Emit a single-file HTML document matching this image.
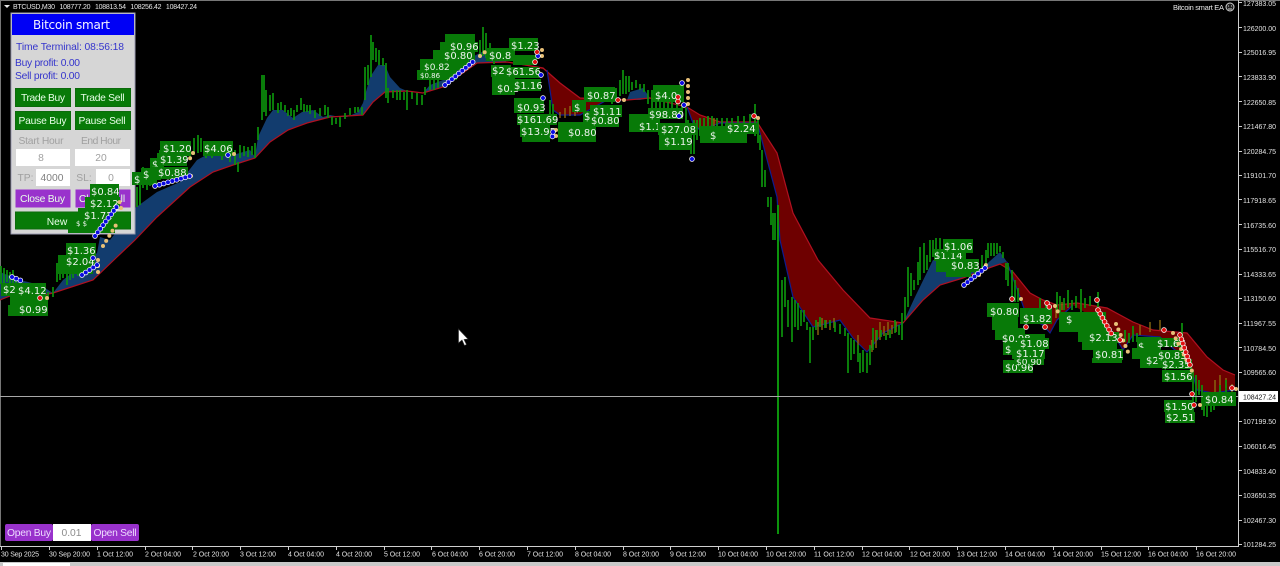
<!DOCTYPE html>
<html><head><meta charset="utf-8"><style>
html,body{margin:0;padding:0;background:#000;width:1280px;height:566px;overflow:hidden}
svg{display:block;position:absolute;left:0;top:0}
text{font-family:"Liberation Sans",sans-serif}
.ax text{font-size:7px;fill:#e4e4e4}
.tm text{font-size:7px;fill:#e4e4e4}
.c{fill:none;stroke:#0c930c;stroke-width:1.7;stroke-linejoin:miter}
.o{fill:none;stroke:#8a6a10;stroke-width:1.4}
.lb rect{fill:#087a08}
.lb text{font-family:"DejaVu Sans",sans-serif;font-size:10px;fill:#eef4ee}
.p text{font-size:10.300px}
.gb{fill:#087a08;stroke:#0b6b0b}
.wt{fill:#e8ffe8;text-anchor:middle}
.gy{fill:#a0a0a0;text-anchor:middle}
.bl{fill:#3434cc}
.mw{fill:none;stroke:#fff;stroke-width:5.500;stroke-linecap:round;stroke-dasharray:0 4.500}
.mb{fill:none;stroke:#0a0ae0;stroke-width:4;stroke-linecap:round;stroke-dasharray:0 4.500}
.mr{fill:none;stroke:#e01010;stroke-width:4;stroke-linecap:round;stroke-dasharray:0 4.500}
.ma{fill:none;stroke:#e8c078;stroke-width:4;stroke-linecap:round;stroke-dasharray:0 6}
</style></head><body>
<svg width="1280" height="566" viewBox="0 0 1280 566" xmlns="http://www.w3.org/2000/svg">
<rect width="1280" height="566" fill="#000"/>
<rect x="0" y="0" width="1280" height="1" fill="#777"/>
<rect x="0" y="0" width="1" height="547" fill="#777"/>

<!-- Blue bands -->
<path fill="#123c6e" d="M0 272L20 280L40 285L53 293L63 280L97 253L100 237L110 240L135 208L157 192L180 182L197 160L210 153L233 155L250 150L255 157L258 137L267 118L273 110L283 110L293 118L302 112L313 110L323 117L330 115L340 117L347 117L358 112L363 103L370 77L378 65L385 65L390 77L400 88L407 91L423 93L430 85L443 80L470 58L490 48L507 62L477 63L443 87L423 93L407 91L385 92L373 102L363 115L330 117L307 123L288 130L270 142L255 158L233 165L213 172L190 187L157 217L135 240L117 257L93 280L53 293L30 298L10 296L0 300Z"/>
<path fill="#123c6e" d="M627 100L630 92L643 88L650 98L640 100Z"/>
<path fill="#123c6e" d="M903 323L915 297L933 260L965 262L980 270L1000 252L1007 262L1000 264L983 270L963 278L940 285L923 300Z"/>
<!-- Red bands -->
<path fill="#6e0000" d="M507 62L543 68L560 83L580 98L607 100L580 115L560 115L553 110L547 70Z"/>
<path fill="#6e0000" d="M650 98L687 107L700 115L720 122L757 122L777 153L793 213L818 260L843 290L870 318L903 323L883 333L867 352L853 338L840 320L813 327L793 297L780 240L777 197L760 133L757 123L720 123L700 130L693 123L687 107Z"/>
<path fill="#6e0000" d="M1000 264L1013 272L1030 293L1043 300L1057 305L1077 303L1107 308L1133 322L1153 330L1187 333L1207 357L1223 370L1235 375L1235 390L1213 393L1197 390L1190 363L1160 337L1133 335L1123 350L1110 328L1073 305L1057 320L1050 333L1043 325L1027 317L1020 297L1007 262Z"/>
<!-- Slow line -->
<path fill="none" stroke="#b01020" stroke-width="1.2" d="M0 300L10 296L30 298L53 293L93 280L117 257L135 240L157 217L190 187L213 172L233 165L255 158L270 142L288 130L307 123L330 117L363 115L373 102L385 92L407 91L423 93L443 87L477 63L507 62L543 68L560 83L580 98L627 100L650 98L687 107L700 115L720 122L757 122L777 153L793 213L818 260L843 290L870 318L903 323L923 300L940 285L963 278L983 270L1000 264L1013 272L1030 293L1043 300L1057 305L1077 303L1107 308L1133 322L1153 330L1187 333L1207 357L1223 370L1235 375"/>
<!-- Fast line lower edge -->
<path fill="none" stroke="#0d1c90" stroke-width="1.2" d="M547 70L553 110L560 115L580 115L607 100M687 107L693 123L700 130L720 123L757 123L760 133L777 197L780 240L793 297L813 327L840 320L853 338L867 352L883 333L903 323M1007 262L1020 297L1027 317L1043 325L1050 333L1057 320L1073 305M1110 328L1123 350L1133 335L1160 337L1190 363L1197 390L1213 393L1235 390"/>

<!-- Orange candles -->
<path class="o" d="M560 112V118M565 108V118M570 106V116M575 110V116M858 335V350M818 322V335M822 318V330M826 320V328M830 322V330M834 318V328M872 340V352M876 330V348M880 322V340M884 326V336M888 322V335M892 325V334M896 322V332M1050 320V312M1056 318V305M1062 310V302M1068 308V300M1140 325V335M1150 322V332M1160 320V330M1215 380V392M1220 375V390M1226 378V388M1232 384V392M700 128V118M708 124V116M714 126V118"/>

<!-- Price -->
<path class="c" d="M1 266V284M4 268V284M7 270V282M10 272V284M13 270V284M16 276V288M20 278V286"/>
<path class="c" d="M48 292V300M53 287V297M57 263V282M60 265V280M63 268V278M67 270V285M70 270V280M73 272V278M78 270V276M137 187V207M140 180V205M143 167V188M147 172V190M150 170V186M153 165V180M160 150V170M165 148V165M170 145V162M190 142V160M194 138V155M198 135V153M201 138V152M206 150V158M212 152V158M222 150V160M230 150V162M235 150V165M238 162V172M240 145V158M244 146V156M248 147V157M252 146V155M255 143V158M258 127V140M262 75V120M264 75V112M266 90V116M270 95V111M273 93V110M278 103V113M281 102V110M285 105V112M288 110V116M291 108V116M294 110V120M297 105V112M301 98V110M304 104V112M307 105V112M310 105V114M315 110V118M320 108V116M325 105V115M328 107V118M332 117V125M336 118V124M340 117V127M345 113V119M350 108V115M355 107V113M358 107V112M362 107V115M365 67V100M368 65V85M371 35V77M373 42V60M376 48V62M379 50V65M383 58V66M386 63V98M388 88V103M393 90V98M397 90V100M400 90V100M404 92V100M407 90V110M412 92V99M417 93V105M422 95V105M425 87V95M430 80V90M434 78V90M438 74V88M445 68V80M452 60V75M460 55V70M468 50V65M474 46V60M480 40V58M483 27V56M486 33V58M490 43V60M494 48V64"/>
<path class="c" d="M550 100V116M553 104V118M612 92V104M616 88V100M620 80V96M623 70V94M626 76V94M629 76V92M632 82V90M636 80V88M640 84V90M644 84V92M648 90V104M652 90V110M656 96V110M660 96V114M664 98V114M668 98V116M672 100V116M677 100V118M682 104V118M686 108V150M688 120V150M691 126V154M694 120V154M697 120V140M700 118V136M704 118V136M708 116V138M712 116V138M717 118V138M722 118V130M727 118V130M732 118V128M738 116V128M744 116V126M750 114V126M755 104V136M758 120V143M760 135V150M762 150V187M765 170V187M768 197V207M771 197V225M773 213V240M775 213V240"/>
<path fill="none" stroke="#0c930c" stroke-width="2" d="M778 205V534"/>
<path class="c" d="M782 280V337M785 277V307M788 300V327M792 297V342M795 300V327M798 303V330M801 310V326M804 310V322M807 322V330M810 327V363M813 327V340M816 320V330M820 317V327M825 320V328M830 320V326M835 322V332M840 324V334M845 328V336M848 333V373M851 338V360M854 340V354M858 345V362M860 353V373M863 350V372M867 353V373M870 345V365M873 328V350M877 330V340M881 330V337M886 333V340M890 330V338M895 320V333M899 325V335M902 313V340M905 297V320M908 267V307M911 273V296M914 280V290M918 262V285M920 247V280M924 243V273M927 255V270M930 240V262M933 240V257M936 238V255M940 238V258M944 240V256"/>
<path class="c" d="M975 262V276M978 262V276M982 255V270M986 250V268M988 243V258M991 243V256M994 243V256M997 243V254M1000 246V252M1003 252V258M1006 263V280M1008 263V286M1012 270V298M1015 280V302M1018 288V302M1040 298V310M1046 300V312M1057 292V310M1060 296V312M1064 298V310M1068 290V307M1072 300V310M1076 296V308M1081 289V312M1085 298V308M1090 296V306M1098 292V307M1125 330V342M1129 333V343M1133 326V342M1137 333V342M1182 323V337M1193 370V403M1196 375V402M1199 380V395M1202 385V410M1204 392V416M1207 393V417M1211 400V412M1214 402V410M1218 395V405M1220 385V400M1226 380V392"/>

<!-- crosshair -->
<rect x="0" y="396" width="1238" height="1" fill="#a8a8a8"/>

<!-- Panel -->
<g class="p">
<rect x="11" y="13" width="124" height="221" fill="#d6d6d6" stroke="#9a9ab0"/>
<rect x="12" y="14" width="122" height="21" fill="#0000f5"/>
<text x="71.5" y="29" fill="#f4f4ff" text-anchor="middle" textLength="77" style="font-size:12px;font-family:'DejaVu Sans',sans-serif">Bitcoin smart</text>
<text class="bl" x="16" y="50" textLength="108">Time Terminal: 08:56:18</text>
<text class="bl" x="15" y="66" textLength="65">Buy profit: 0.00</text>
<text class="bl" x="15" y="79" textLength="65">Sell profit: 0.00</text>
<rect class="gb" x="15.5" y="88.5" width="55" height="18"/><rect class="gb" x="75.5" y="88.5" width="55" height="18"/>
<text class="wt" x="43" y="101" textLength="44">Trade Buy</text><text class="wt" x="102.500" y="101" textLength="44">Trade Sell</text>
<rect class="gb" x="15.5" y="111.500" width="55" height="18"/><rect class="gb" x="75.5" y="111.500" width="55" height="18"/>
<text class="wt" x="42.500" y="124" textLength="48">Pause Buy</text><text class="wt" x="102" y="124" textLength="47">Pause Sell</text>
<text class="gy" x="41" y="144" textLength="45">Start Hour</text><text class="gy" x="101" y="144" textLength="40">End Hour</text>
<rect x="16" y="149" width="54" height="17" fill="#fff"/><rect x="75" y="149" width="55" height="17" fill="#fff"/>
<text class="gy" x="41" y="161">8</text><text class="gy" x="101" y="161">20</text>
<text class="gy" x="25.500" y="181">TP:</text><text class="gy" x="84" y="181">SL:</text>
<rect x="36" y="169" width="34" height="17" fill="#fff"/><rect x="96" y="169" width="34" height="17" fill="#fff"/>
<text x="52" y="181" text-anchor="middle" fill="#808080">4000</text><text class="gy" x="111" y="181">0</text>
<rect x="15.5" y="189.500" width="55" height="18" fill="#9932cc"/><rect x="75.500" y="189.500" width="55" height="18" fill="#9932cc"/>
<text class="wt" x="42.500" y="202" textLength="45">Close Buy</text><text class="wt" x="102" y="202">Close Sell</text>
<rect class="gb" x="15.5" y="212" width="115" height="17"/>
<text class="wt" x="57" y="225">New</text>
<!-- bottom -->
<rect x="5" y="524" width="48" height="17" rx="2" fill="#9932cc"/><rect x="91" y="524" width="48" height="17" rx="2" fill="#9932cc"/>
<rect x="53" y="524" width="38" height="17" fill="#fff"/>
<text class="wt" x="29" y="536" textLength="44" style="fill:#eedcff">Open Buy</text>
<text class="wt" x="115" y="536" textLength="43" style="fill:#eedcff">Open Sell</text>
<text class="gy" x="71.500" y="536" style="fill:#8c8c8c">0.01</text>
</g>

<!-- Labels -->
<g class="lb">
<rect x="132" y="172" width="25" height="13"/><text x="134" y="183">$</text>
<rect x="141" y="168" width="20" height="12"/><text x="143" y="178">$</text>
<rect x="150" y="158" width="14" height="12"/><text x="152" y="168">$</text>
<rect x="160" y="141" width="31" height="15"/><text x="163" y="152">$1.20</text>
<rect x="157" y="153" width="30" height="13"/><text x="160" y="163">$1.39</text>
<rect x="150" y="167" width="38" height="12"/><text x="158" y="176">$0.88</text>
<rect x="203" y="141" width="30" height="15"/><text x="204" y="152">$4.06</text>
<rect x="68" y="220" width="47" height="13"/><text x="76" y="226" style="font-size:7px">$ $</text>
<rect x="78" y="208" width="37" height="12"/><text x="84" y="219">$1.72</text>
<rect x="85" y="197" width="35" height="12"/><text x="90" y="207">$2.12</text>
<rect x="90" y="184" width="29" height="13"/><text x="91" y="195">$0.84</text>
<rect x="57" y="266" width="36" height="8"/>
<rect x="58" y="255" width="37" height="12"/><text x="66" y="265">$2.04</text>
<rect x="66" y="243" width="30" height="13"/><text x="67" y="254">$1.36</text>
<rect x="1" y="283" width="16" height="13"/><text x="3" y="293">$2</text>
<rect x="10" y="295" width="38" height="11"/>
<rect x="17" y="283" width="29" height="13"/><text x="18" y="294">$4.12</text>
<rect x="8" y="305" width="40" height="11"/><text x="19" y="313">$0.99</text>

<rect x="417" y="70" width="40" height="10"/><text x="420" y="78" style="font-size:7px">$0.86</text>
<rect x="420" y="59" width="48" height="11"/><text x="424" y="70" style="font-size:9px">$0.82</text>
<rect x="445" y="34" width="30" height="10"/>
<rect x="433" y="50" width="42" height="10"/><text x="444" y="59">$0.80</text>
<rect x="440" y="42" width="38" height="10"/><text x="450" y="50">$0.96</text>
<rect x="486" y="48" width="29" height="13"/><text x="489" y="59">$0.8</text>
<rect x="509" y="38" width="29" height="13"/><text x="511" y="49">$1.23</text>
<rect x="513" y="55" width="24" height="10"/>
<rect x="491" y="65" width="20" height="12"/><text x="492" y="74">$2</text>
<rect x="492" y="77" width="23" height="18"/><text x="497" y="92">$0.8</text>
<rect x="507" y="67" width="32" height="11"/><text x="506" y="75">$61.56</text>
<rect x="513" y="79" width="28" height="12"/><text x="514" y="89">$1.16</text>
<rect x="514" y="98" width="30" height="15"/><text x="517" y="111">$0.93</text>
<rect x="522" y="134" width="28" height="8"/>
<rect x="517" y="114" width="40" height="11"/><text x="517" y="123">$161.69</text>
<rect x="520" y="125" width="30" height="12"/><text x="521" y="135">$13.95</text>
<rect x="558" y="122" width="38" height="20"/><text x="568" y="136">$0.80</text>
<rect x="584" y="87" width="31" height="15"/><text x="587" y="99">$0.87</text>
<rect x="572" y="100" width="14" height="12"/><text x="574" y="111">$</text>
<rect x="583" y="111" width="10" height="11"/><text x="584" y="120">$</text>
<rect x="590" y="105" width="32" height="12"/><text x="593" y="115">$1.11</text>
<rect x="590" y="116" width="29" height="11"/><text x="591" y="124">$0.80</text>
<rect x="653" y="85" width="31" height="17"/><text x="655" y="99">$4.0</text>
<rect x="629" y="114" width="31" height="18"/><text x="639" y="130">$1.1</text>
<rect x="648" y="108" width="35" height="11"/><text x="649" y="118">$98.80</text>
<rect x="659" y="135" width="32" height="15"/><text x="664" y="145">$1.19</text>
<rect x="658" y="123" width="38" height="12"/><text x="661" y="133">$27.08</text>
<rect x="700" y="126" width="47" height="17"/><text x="710" y="139">$</text>
<rect x="725" y="123" width="33" height="11"/><text x="727" y="132">$2.24</text>

<rect x="934" y="249" width="32" height="12"/><text x="934" y="259">$1.14</text>
<rect x="943" y="239" width="30" height="14"/><text x="944" y="250">$1.06</text>
<rect x="946" y="271" width="25" height="6"/>
<rect x="936" y="259" width="43" height="13"/><text x="951" y="269">$0.83</text>
<rect x="987" y="303" width="32" height="14"/><text x="990" y="315">$0.80</text>
<rect x="992" y="317" width="26" height="13"/>
<rect x="995" y="328" width="30" height="12"/><text x="1002" y="342">$0.</text>
<rect x="1020" y="308" width="32" height="16"/><text x="1023" y="322">$1.82</text>
<rect x="1003" y="334" width="42" height="11"/><text x="1002" y="342">$0.98</text>
<rect x="1003" y="343" width="14" height="12"/><text x="1005" y="353">$</text>
<rect x="1003" y="360" width="30" height="13"/><text x="1005" y="371">$0.96</text>
<rect x="1014" y="357" width="30" height="8"/><text x="1016" y="365" style="font-size:9px">$0.90</text>
<rect x="1012" y="348" width="33" height="11"/><text x="1016" y="357">$1.17</text>
<rect x="1017" y="338" width="32" height="11"/><text x="1020" y="347">$1.08</text>
<rect x="1059" y="312" width="47" height="20"/><text x="1066" y="323">$</text>
<rect x="1078" y="330" width="30" height="12"/>
<rect x="1082" y="342" width="35" height="8"/>
<rect x="1092" y="358" width="30" height="5"/>
<rect x="1087" y="332" width="32" height="11"/><text x="1089" y="341">$2.13</text>
<rect x="1093" y="349" width="30" height="11"/><text x="1095" y="358">$0.81</text>
<rect x="1137" y="337" width="24" height="22"/><text x="1138" y="350">$</text>
<rect x="1132" y="348" width="26" height="11"/>
<rect x="1157" y="338" width="27" height="9"/><text x="1157" y="347">$1.67</text>
<rect x="1140" y="355" width="22" height="13"/><text x="1146" y="364">$2</text>
<rect x="1157" y="350" width="30" height="10"/><text x="1158" y="359">$0.83</text>
<rect x="1162" y="359" width="30" height="10"/><text x="1162" y="368">$2.35</text>
<rect x="1162" y="370" width="31" height="12"/><text x="1164" y="380">$1.56</text>
<rect x="1165" y="412" width="30" height="11"/><text x="1166" y="421">$2.51</text>
<rect x="1164" y="400" width="30" height="12"/><text x="1165" y="410">$1.50</text>
<rect x="1203" y="392" width="33" height="14"/><text x="1205" y="403">$0.84</text>
</g>

<!-- Markers -->
<g>
<path class="ma" d="M191 176h1M193 153L188 162M234 154h2M121 208L119 200M103 246L116 225M47 298L49 300M98 272V258M480 56L485 52M542 50V62M556 130V138M624 100h2M688 80V110M758 118h2M979 275L986 265M1021 299h4M1055 306L1058 312M1116 324L1128 352M1173 333L1194 375M1200 405h2M1236 389h2"/>
<path class="mw" d="M155 186L190 176M228 155h3M95 236L118 205M82 275L97 265M93 258h2M12 277L22 281M445 85L475 60M538 56h2M541 75h2M543 98h3M553 132L552 140M684 105h2M682 83h2M692 159h1M679 116h3M964 285L985 268"/>
<path class="mb" d="M155 186L190 176M228 155h3M95 236L118 205M82 275L97 265M93 258h2M12 277L22 281M445 85L475 60M538 56h2M541 75h2M543 98h3M553 132L552 140M684 105h2M682 83h2M692 159h1M679 116h3M964 285L985 268"/>
<path class="mw" d="M40 298h3M537 52h2M535 62h2M618 100h2M678 97V102M1012 299h3M1047 303L1050 308M1026 327h3M1045 327h3M1097 300h1M1098 310L1112 335M1120 340h3M1164 330h1M1180 335L1190 365M1192 394h1M1194 405h1M1232 388h2M754 116h1"/>
<path class="mr" d="M40 298h3M537 52h2M535 62h2M618 100h2M678 97V102M1012 299h3M1047 303L1050 308M1026 327h3M1045 327h3M1097 300h1M1098 310L1112 335M1120 340h3M1164 330h1M1180 335L1190 365M1192 394h1M1194 405h1M1232 388h2M754 116h1"/>
</g>

<!-- Axes -->
<rect x="1238" y="0" width="1" height="547" fill="#cfcfcf"/>
<rect x="0" y="546" width="1239" height="1" fill="#cfcfcf"/>
<g class="ax">
<path stroke="#cfcfcf" d="M1239 2.500h3M1239 27.500h3M1239 52.500h3M1239 76.500h3M1239 101.500h3M1239 126.500h3M1239 151.500h3M1239 175.500h3M1239 199.500h3M1239 224.500h3M1239 249.500h3M1239 274.500h3M1239 298.500h3M1239 323.500h3M1239 347.500h3M1239 372.500h3M1239 421.500h3M1239 446.500h3M1239 470.500h3M1239 495.500h3M1239 520.500h3M1239 544.500h3"/>
<text x="1243" y="6" textLength="33">127383.05</text>
<text x="1243" y="31" textLength="33">126200.00</text>
<text x="1243" y="55" textLength="33">125016.95</text>
<text x="1243" y="80" textLength="33">123833.90</text>
<text x="1243" y="105" textLength="33">122650.85</text>
<text x="1243" y="129" textLength="33">121467.80</text>
<text x="1243" y="154" textLength="33">120284.75</text>
<text x="1243" y="178" textLength="33">119101.70</text>
<text x="1243" y="203" textLength="33">117918.65</text>
<text x="1243" y="228" textLength="33">116735.60</text>
<text x="1243" y="252" textLength="33">115516.70</text>
<text x="1243" y="277" textLength="33">114333.65</text>
<text x="1243" y="301" textLength="33">113150.60</text>
<text x="1243" y="326" textLength="33">111967.55</text>
<text x="1243" y="351" textLength="33">110784.50</text>
<text x="1243" y="375" textLength="33">109565.60</text>
<rect x="1239" y="391" width="39" height="11" fill="#fff"/>
<text x="1243" y="399.500" textLength="33" style="fill:#111">108427.24</text>
<text x="1243" y="424" textLength="33">107199.50</text>
<text x="1243" y="449" textLength="33">106016.45</text>
<text x="1243" y="474" textLength="33">104833.40</text>
<text x="1243" y="498" textLength="33">103650.35</text>
<text x="1243" y="523" textLength="33">102467.30</text>
<text x="1243" y="547" textLength="33">101284.25</text>
</g>
<g class="tm">
<path stroke="#cfcfcf" d="M1.500 547v3M49.500 547v3M97.500 547v3M145.500 547v3M192.500 547v3M240.500 547v3M288.500 547v3M336.500 547v3M384.500 547v3M431.500 547v3M479.500 547v3M527.500 547v3M575.500 547v3M623.500 547v3M670.500 547v3M718.500 547v3M766.500 547v3M814.500 547v3M862.500 547v3M909.500 547v3M957.500 547v3M1005.500 547v3M1053.500 547v3M1101.500 547v3M1148.500 547v3M1196.500 547v3"/>
<text x="1" y="556.500" textLength="38">30 Sep 2025</text>
<text x="49" y="556.500" textLength="41">30 Sep 20:00</text>
<text x="97" y="556.500" textLength="36">1 Oct 12:00</text>
<text x="145" y="556.500" textLength="36">2 Oct 04:00</text>
<text x="193" y="556.500" textLength="36">2 Oct 20:00</text>
<text x="240" y="556.500" textLength="36">3 Oct 12:00</text>
<text x="288" y="556.500" textLength="36">4 Oct 04:00</text>
<text x="336" y="556.500" textLength="36">4 Oct 20:00</text>
<text x="384" y="556.500" textLength="36">5 Oct 12:00</text>
<text x="432" y="556.500" textLength="36">6 Oct 04:00</text>
<text x="479" y="556.500" textLength="36">6 Oct 20:00</text>
<text x="527" y="556.500" textLength="36">7 Oct 12:00</text>
<text x="575" y="556.500" textLength="36">8 Oct 04:00</text>
<text x="623" y="556.500" textLength="36">8 Oct 20:00</text>
<text x="670" y="556.500" textLength="36">9 Oct 12:00</text>
<text x="718" y="556.500" textLength="40">10 Oct 04:00</text>
<text x="766" y="556.500" textLength="40">10 Oct 20:00</text>
<text x="814" y="556.500" textLength="40">11 Oct 12:00</text>
<text x="862" y="556.500" textLength="40">12 Oct 04:00</text>
<text x="910" y="556.500" textLength="40">12 Oct 20:00</text>
<text x="957" y="556.500" textLength="40">13 Oct 12:00</text>
<text x="1005" y="556.500" textLength="40">14 Oct 04:00</text>
<text x="1053" y="556.500" textLength="40">14 Oct 20:00</text>
<text x="1101" y="556.500" textLength="40">15 Oct 12:00</text>
<text x="1148" y="556.500" textLength="40">16 Oct 04:00</text>
<text x="1196" y="556.500" textLength="40">16 Oct 20:00</text>
</g>

<!-- Top texts -->
<path d="M4 5h6l-3 3z" fill="#e8e8e8"/>
<text x="13" y="9" fill="#e8e8e8" textLength="184" style="font-size:7px;word-spacing:3px">BTCUSD,M30 108777.20 108813.54 108256.42 108427.24</text>
<text x="1173" y="10" fill="#e8e8e8" textLength="51" style="font-size:7.500px">Bitcoin smart EA</text>
<circle cx="1230" cy="7" r="4" fill="#222" stroke="#cfcfcf"/>
<path d="M1228 6h1M1231 6h1M1228 9h4" stroke="#cfcfcf" fill="none"/>

<!-- Cursor -->
<path d="M458.500 329V343L462 340L464.500 345.500L466.500 344.500L464 339.500L468 339Z" fill="#fff" stroke="#333" stroke-width=".6"/>

<!-- Bottom strip -->
<rect x="0" y="562" width="1280" height="4" fill="#c8c8c8"/>
<rect x="3" y="563" width="67" height="3" fill="#fff"/>
</svg>
</body></html>
